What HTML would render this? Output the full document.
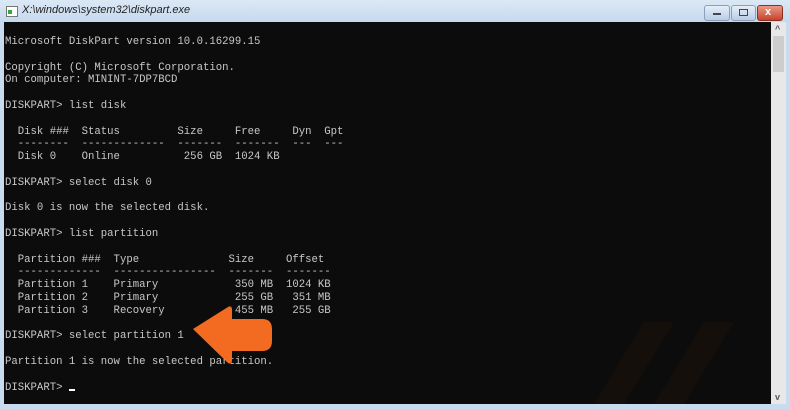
<!DOCTYPE html>
<html><head><meta charset="utf-8"><style>
html,body{margin:0;padding:0;width:790px;height:409px;overflow:hidden;background:#c9dcef;}
.title{position:absolute;left:0;top:0;width:790px;height:22px;background:linear-gradient(#dbe8f5,#c6d9ee);}
.ttext{position:absolute;left:22px;top:4px;font:italic 11px "Liberation Sans",sans-serif;color:#222;}
.ico{position:absolute;left:6px;top:6px;width:10px;height:9px;background:#fff;border:1px solid #777;}
.ico:after{content:"";position:absolute;left:1px;top:3px;width:4px;height:4px;background:#3a3;}
.btn{position:absolute;top:5px;height:14px;border:1px solid #8aa0bb;border-radius:3px;background:linear-gradient(#e6eef8,#b9cde4);}
.con{position:absolute;left:4px;top:22px;width:767px;height:382px;background:#0c0c0c;overflow:hidden;}
pre{position:absolute;left:1px;top:14px;margin:0;font:10.65px/12.8px "Liberation Mono",monospace;color:#c8c8c8;}
.sb{position:absolute;left:771px;top:22px;width:15px;height:382px;background:#e8e8e8;}
.thumb{position:absolute;left:773px;top:36px;width:11px;height:36px;background:#cdcdcd;}
</style></head><body>
<div class="title"><div class="ico"></div><div class="ttext">X:\windows\system32\diskpart.exe</div>
<div class="btn" style="left:704px;width:24px;"><div style="position:absolute;left:8px;top:7px;width:8px;height:2px;background:#445;"></div></div>
<div class="btn" style="left:731px;width:23px;"><div style="position:absolute;left:7px;top:3px;width:7px;height:5px;border:1px solid #445;"></div></div>
<div class="btn" style="left:757px;width:24px;background:linear-gradient(#e99a86,#c7432c);border-color:#8b2f20;"><div style="position:absolute;left:7px;top:0px;color:#fff;font:bold 11px 'Liberation Sans',sans-serif;">x</div></div>
</div>
<div class="con">
<svg width="767" height="382" style="position:absolute;left:0;top:0">
<polygon points="640,300 670,300 620,382 590,382" fill="#140f0a"/>
<polygon points="700,300 730,300 680,382 650,382" fill="#140f0a"/>
</svg>
<pre>Microsoft DiskPart version 10.0.16299.15

Copyright (C) Microsoft Corporation.
On computer: MININT-7DP7BCD

DISKPART&gt; list disk

  Disk ###  Status         Size     Free     Dyn  Gpt
  --------  -------------  -------  -------  ---  ---
  Disk 0    Online          256 GB  1024 KB

DISKPART&gt; select disk 0

Disk 0 is now the selected disk.

DISKPART&gt; list partition

  Partition ###  Type              Size     Offset
  -------------  ----------------  -------  -------
  Partition 1    Primary            350 MB  1024 KB
  Partition 2    Primary            255 GB   351 MB
  Partition 3    Recovery           455 MB   255 GB

DISKPART&gt; select partition 1

Partition 1 is now the selected partition.

DISKPART&gt; <span style="display:inline-block;width:6px;height:2px;background:#fff;vertical-align:-1px"></span></pre>
<svg width="767" height="382" style="position:absolute;left:0;top:0">
<path d="M189,313 L224,291 Q228,289 228,294 L228,303 L258,303 Q268,303 268,313 L268,325 Q268,335 258,335 L228,335 L228,344 Q228,349 224,347 Z" fill="#f26b21" transform="translate(0,-6)"/>
</svg>
</div>
<div class="sb"></div><div class="thumb"></div>
<div style="position:absolute;left:775px;top:24px;font:bold 9px 'Liberation Sans';color:#555">^</div>
<div style="position:absolute;left:775px;top:392px;font:bold 9px 'Liberation Sans';color:#555">v</div>
</body></html>
